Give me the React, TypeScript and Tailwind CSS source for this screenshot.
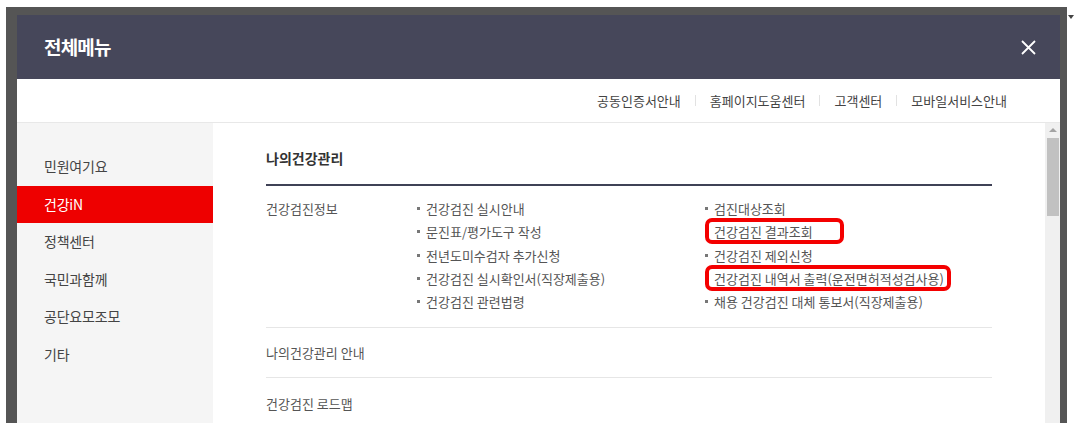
import React from 'react';

const sideMenu = ['민원여기요', '건강iN', '정책센터', '국민과함께', '공단요모조모', '기타'];

const topLinks = ['공동인증서안내', '홈페이지도움센터', '고객센터', '모바일서비스안내'];

interface Item {
    label: string;
    mark?: number;
}

const leftItems: Item[] = [
    { label: '건강검진 실시안내' },
    { label: '문진표/평가도구 작성' },
    { label: '전년도미수검자 추가신청' },
    { label: '건강검진 실시확인서(직장제출용)' },
    { label: '건강검진 관련법령' },
];

const rightItems: Item[] = [
    { label: '검진대상조회' },
    { label: '건강검진 결과조회', mark: 139 },
    { label: '건강검진 제외신청' },
    { label: '건강검진 내역서 출력(운전면허적성검사용)', mark: 246 },
    { label: '채용 건강검진 대체 통보서(직장제출용)' },
];

const ItemList: React.FC<{ items: Item[]; className?: string }> = ({ items, className }) => (
    <ul className={className}>
        {items.map((item) => (
            <li key={item.label} className="relative flex items-center whitespace-nowrap">
                <span
                    className={`inline-block w-[3px] h-[3px] mr-[6px] bg-[#777] ${item.mark ? 'invisible' : ''}`}
                />
                <span>{item.label}</span>
                {item.mark && (
                    <span
                        className="absolute left-0 top-[-2px] h-[26px] border-[4px] border-[#f40000] rounded-[7px]"
                        style={{ width: item.mark }}
                    />
                )}
            </li>
        ))}
    </ul>
);

export default function App() {
    return (
        <div
            className="relative w-[1080px] h-[433px] bg-white overflow-hidden"
            style={{ fontFamily: '"Noto Sans CJK KR", "Noto Sans", sans-serif' }}
        >
            <div className="ml-[6px] mt-[7px] w-[1061px] h-[416px] bg-[#555555] pt-[8px] pl-[11px]">
                <div className="w-[1043px] h-[408px] bg-white flex flex-col overflow-hidden">
                    {/* header */}
                    <div className="h-[64px] shrink-0 bg-[#46475a] flex items-center justify-between pl-[27px] pr-[24px]">
                        <h2 className="text-white text-[19px] font-bold tracking-[-0.8px]">전체메뉴</h2>
                        <svg width="15" height="15" viewBox="0 0 15 15" className="text-white">
                            <path d="M1 1L14 14M14 1L1 14" stroke="currentColor" strokeWidth="1.8" />
                        </svg>
                    </div>

                    {/* top links */}
                    <div className="h-[44px] shrink-0 border-b border-[#e8e8e8] flex items-center justify-end pr-[53px] text-[13px] text-[#444]">
                        {topLinks.map((link, i) => (
                            <React.Fragment key={link}>
                                {i > 0 && <span className="w-px h-[11px] bg-[#e2e2e2] mx-[14px]" />}
                                <span>{link}</span>
                            </React.Fragment>
                        ))}
                    </div>

                    {/* body */}
                    <div className="flex flex-1 min-h-0">
                        <nav className="w-[196px] shrink-0 bg-[#f5f5f5] pt-[25px]">
                            {sideMenu.map((m) => (
                                <div
                                    key={m}
                                    className={`h-[37.5px] pl-[27px] flex items-center text-[14px] tracking-[-0.2px] ${
                                        m === '건강iN' ? 'bg-[#ee0000] text-white' : 'text-[#444]'
                                    }`}
                                >
                                    {m}
                                </div>
                            ))}
                        </nav>

                        <div className="flex-1 px-[53px] text-[13px] text-[#555]">
                            <div className="pt-[25px] pb-[16px] border-b-2 border-[#3f4256] text-[14px] leading-[20px] font-bold text-[#333]">
                                나의건강관리
                            </div>

                            <div className="flex pt-[11px] pb-[14px] border-b border-[#e6e6e6] leading-[23.3px]">
                                <div className="w-[151px] shrink-0">건강검진정보</div>
                                <ItemList items={leftItems} className="w-[288px] shrink-0" />
                                <ItemList items={rightItems} className="flex-1" />
                            </div>

                            <div className="h-[50px] flex items-center border-b border-[#e6e6e6]">나의건강관리 안내</div>
                            <div className="h-[50px] flex items-center">건강검진 로드맵</div>
                        </div>

                        {/* scrollbar */}
                        <div className="w-[15px] shrink-0 bg-[#f0f0f0] flex flex-col items-center">
                            <div className="mt-[5px] w-0 h-0 border-l-[4px] border-r-[4px] border-b-[4px] border-l-transparent border-r-transparent border-b-[#a3a3a3]" />
                            <div className="mt-[6px] ml-[1px] w-[12px] h-[78px] bg-[#c1c1c1]" />
                        </div>
                    </div>
                </div>
            </div>

            <div className="absolute left-[1068px] top-[15px] w-0 h-0 border-l-[3px] border-r-[3px] border-t-[4px] border-l-transparent border-r-transparent border-t-[#444]" />
        </div>
    );
}
